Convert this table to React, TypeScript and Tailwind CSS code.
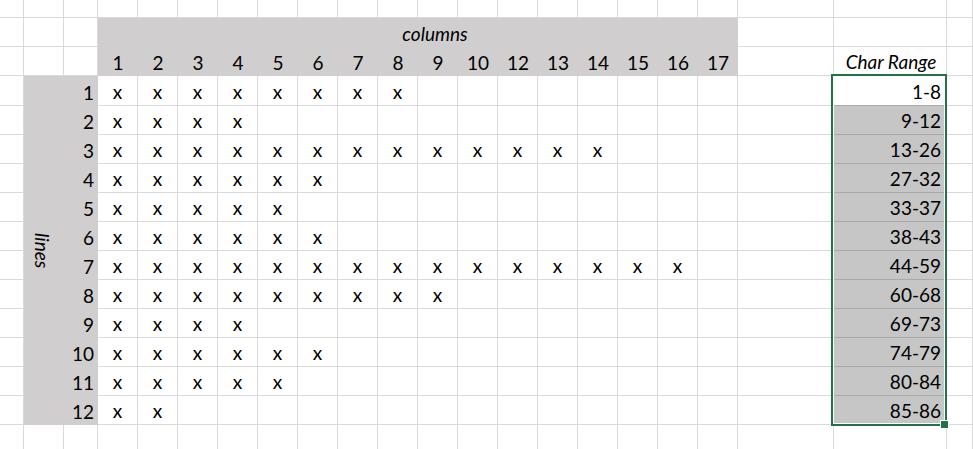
import React from "react";

const counts = [8, 4, 13, 6, 5, 6, 15, 9, 4, 6, 5, 2];
const ranges = ["1-8", "9-12", "13-26", "27-32", "33-37", "38-43", "44-59", "60-68", "69-73", "74-79", "80-84", "85-86"];
const colLabels = ["1", "2", "3", "4", "5", "6", "7", "8", "9", "10", "12", "13", "14", "15", "16", "17"];

const Blank = () => <div className="border-r border-b border-[#dadada] bg-white" />;

export default function App() {
  const cells: React.ReactNode[] = [];
  let k = 0;
  // Row 1
  for (let i = 0; i < 22; i++) cells.push(<Blank key={k++} />);
  // Row 2
  for (let i = 0; i < 3; i++) cells.push(<Blank key={k++} />);
  cells.push(
    <div key={k++} className="col-span-16 row-span-2 bg-[#d0cece] grid grid-cols-[repeat(16,40px)] grid-rows-[29px_29px]">
      <div className="col-span-16 flex items-end pb-[3px] leading-[20px]">
        <div className="ml-[257px] w-[160px] text-center italic">columns</div>
      </div>
      {colLabels.map((c) => (
        <div key={c} className="flex items-end justify-center pb-[3px] leading-[20px]">
          {c}
        </div>
      ))}
    </div>
  );
  for (let i = 0; i < 3; i++) cells.push(<Blank key={k++} />);
  // Row 3
  for (let i = 0; i < 3; i++) cells.push(<Blank key={k++} />);
  cells.push(<Blank key={k++} />);
  cells.push(
    <div key={k++} className="border-r border-b border-[#dadada] bg-white flex items-end justify-center pb-[3px] leading-[20px] italic pl-[2px]">
      Char Range
    </div>
  );
  cells.push(<Blank key={k++} />);
  // Data rows
  counts.forEach((n, r) => {
    cells.push(<Blank key={k++} />);
    if (r === 0) {
      cells.push(
        <div key={k++} className="row-span-12 bg-[#d0cece] flex items-center justify-center pr-[4px]">
          <span className="italic leading-[20px] [writing-mode:vertical-rl]">lines</span>
        </div>
      );
    }
    cells.push(
      <div key={k++} className="bg-[#d0cece] flex items-end justify-end pr-[4px] pb-[3px] leading-[20px]">
        {r + 1}
      </div>
    );
    for (let c = 0; c < 16; c++) {
      cells.push(
        <div key={k++} className="border-r border-b border-[#dadada] bg-white flex items-end justify-center pb-[3px] leading-[20px]">
          {c < n ? "x" : ""}
        </div>
      );
    }
    cells.push(<Blank key={k++} />);
    cells.push(
      <div
        key={k++}
        className={
          r === 0
            ? "border-r border-b border-[#a9a9a9] bg-white flex items-end justify-end pr-[5px] pb-[3px] leading-[20px]"
            : "border-r border-b border-[#a9a9a9] bg-[#c6c6c6] flex items-end justify-end pr-[5px] pb-[3px] leading-[20px]"
        }
      >
        {ranges[r]}
      </div>
    );
    cells.push(<Blank key={k++} />);
  });
  // Last row
  for (let i = 0; i < 22; i++) cells.push(<Blank key={k++} />);

  return (
    <div className="relative w-[973px] h-[449px] overflow-hidden bg-white text-black font-['Lato',sans-serif] text-[19px]">
      <div className="grid grid-cols-[24px_40px_34px_repeat(16,40px)_96px_113px_1fr] grid-rows-[18px_29px_29px_30px_repeat(11,29px)_29px]">
        {cells}
      </div>
      <div className="absolute left-[831px] top-[74px] w-[116px] h-[352px] border-2 border-[#217346] shadow-[inset_0_0_0_1px_#fff] pointer-events-none" />
      <div className="absolute left-[940px] top-[420px] w-[9px] h-[9px] bg-[#217346] border border-white" />
    </div>
  );
}
